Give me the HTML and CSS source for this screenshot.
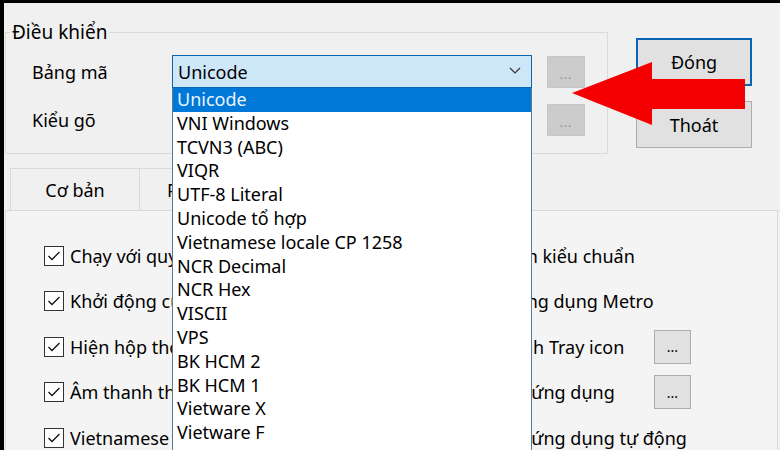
FILE: index.html
```html
<!DOCTYPE html>
<html lang="vi">
<head>
<meta charset="utf-8">
<title>Bảng điều khiển</title>
<link rel="stylesheet" href="styles.css">
</head>
<body>
<div class="window">
  <div class="top">
    <fieldset class="group">
      <legend class="group-title">Điều khiển</legend>
      <div class="group-body">
        <div class="field-label">Bảng mã</div>
        <div class="combo-wrap">
          <div class="combo combo-active">
            <span>Unicode</span>
            <svg class="chev" width="12" height="7" viewBox="0 0 12 7"><polyline points="1,1 6,6 11,1" fill="none" stroke="#333" stroke-width="1.2"/></svg>
          </div>
          <ul class="droplist">
            <li class="sel">Unicode</li>
            <li>VNI Windows</li>
            <li>TCVN3 (ABC)</li>
            <li>VIQR</li>
            <li>UTF-8 Literal</li>
            <li>Unicode tổ hợp</li>
            <li>Vietnamese locale CP 1258</li>
            <li>NCR Decimal</li>
            <li>NCR Hex</li>
            <li>VISCII</li>
            <li>VPS</li>
            <li>BK HCM 2</li>
            <li>BK HCM 1</li>
            <li>Vietware X</li>
            <li>Vietware F</li>
            <li>X UTF-8</li>
          </ul>
        </div>
        <button class="mini-btn" disabled>...</button>
        <div class="field-label">Kiểu gõ</div>
        <div class="combo"><span>Telex</span></div>
        <button class="mini-btn" disabled>...</button>
      </div>
    </fieldset>
    <div class="actions">
      <button class="btn btn-default">Đóng</button>
      <button class="btn">Thoát</button>
    </div>
  </div>

  <div class="tabs">
    <div class="tab">Cơ bản</div>
    <div class="tab tab-2">Phím tắt</div>
  </div>

  <div class="panel">
    <div class="opt-row">
      <label class="opt"><span class="cb"><svg width="14" height="12" viewBox="0 0 14 12"><polyline points="1.5,6 5,9.5 12.5,2" fill="none" stroke="#111" stroke-width="1.3"/></svg></span>Chạy với quyền Administrator</label>
      <span class="opt-right">in kiểu chuẩn</span>
      <span></span>
    </div>
    <div class="opt-row">
      <label class="opt"><span class="cb"><svg width="14" height="12" viewBox="0 0 14 12"><polyline points="1.5,6 5,9.5 12.5,2" fill="none" stroke="#111" stroke-width="1.3"/></svg></span>Khởi động cùng Windows</label>
      <span class="opt-right">ìng dụng Metro</span>
      <span></span>
    </div>
    <div class="opt-row">
      <label class="opt"><span class="cb"><svg width="14" height="12" viewBox="0 0 14 12"><polyline points="1.5,6 5,9.5 12.5,2" fill="none" stroke="#111" stroke-width="1.3"/></svg></span>Hiện hộp thoại khi khởi động</label>
      <span class="opt-right">nh Tray icon</span>
      <button class="dots-btn">...</button>
    </div>
    <div class="opt-row">
      <label class="opt"><span class="cb"><svg width="14" height="12" viewBox="0 0 14 12"><polyline points="1.5,6 5,9.5 12.5,2" fill="none" stroke="#111" stroke-width="1.3"/></svg></span>Âm thanh thông báo</label>
      <span class="opt-right">i ứng dụng</span>
      <button class="dots-btn">...</button>
    </div>
    <div class="opt-row">
      <label class="opt"><span class="cb"><svg width="14" height="12" viewBox="0 0 14 12"><polyline points="1.5,6 5,9.5 12.5,2" fill="none" stroke="#111" stroke-width="1.3"/></svg></span>Vietnamese interface</label>
      <span class="opt-right">i ứng dụng tự động</span>
      <span></span>
    </div>
  </div>

  <svg class="arrow" width="180" height="70" viewBox="0 0 180 70">
    <polygon points="4,34 84,3 84,20 177,20 177,50 84,50 84,66" fill="#f40000"/>
  </svg>
</div>
</body>
</html>
```

FILE: styles.css
```css
* { box-sizing: border-box; }

html, body {
  margin: 0;
  padding: 0;
  width: 780px;
  height: 450px;
  overflow: hidden;
}

body {
  font-family: "Noto Sans", "Open Sans", sans-serif;
  font-size: 18px;
  color: #000;
  background: #000;
}

.window {
  position: relative;
  width: 780px;
  height: 450px;
  border-top: 3px solid #000;
  border-left: 4px solid #000;
  background: #f0f0f0;
  overflow: hidden;
}

.top {
  display: flex;
  align-items: flex-start;
  padding-top: 19px;
  padding-left: 1px;
}

.group {
  margin: 0;
  padding: 0;
  width: 603px;
  border: 1px solid #dadada;
  min-width: 0;
}

.group-title {
  font-size: 19px;
  line-height: 20px;
  padding: 0 2px;
  margin-left: 4px;
}

.group-body {
  display: grid;
  grid-template-columns: 140px 360px 53px;
  grid-auto-rows: 33px;
  row-gap: 15px;
  padding: 13px 21px 17px 26px;
  align-items: center;
}

.field-label {
  font-size: 18px;
}

.combo-wrap {
  position: relative;
  height: 33px;
}

.combo {
  height: 33px;
  display: flex;
  align-items: center;
  justify-content: space-between;
  padding: 0 10px 0 5px;
  border: 1px solid #7a7a7a;
  background: #fff;
}

.combo-active {
  border-color: #0a64b4;
  background: #cde6f8;
}

.chev { margin-top: -2px; }

.droplist {
  position: absolute;
  top: 33px;
  left: 0;
  width: 360px;
  height: 400px;
  margin: 0;
  padding: 0;
  list-style: none;
  background: #fff;
  border: 1px solid #5f7b94;
  border-top: none;
  z-index: 5;
}

.droplist li {
  height: 23.8px;
  line-height: 23.8px;
  padding-left: 4px;
  white-space: nowrap;
}

.droplist li.sel {
  background: #0078d7;
  color: #e8f4ff;
}

.mini-btn {
  justify-self: end;
  width: 38px;
  height: 32px;
  border: 1px solid #c6c6c6;
  background: #cccccc;
  color: #8a8a8a;
  font-family: inherit;
  font-size: 12px;
  padding: 6px 0 0 0;
  letter-spacing: 1px;
}

.actions {
  display: flex;
  flex-direction: column;
  gap: 15px;
  margin-left: 28px;
  margin-top: 16px;
}

.btn {
  width: 116px;
  height: 47px;
  border: 1px solid #adadad;
  background: #e1e1e1;
  font-family: inherit;
  font-size: 18px;
  color: #000;
  padding: 0;
}

.btn-default {
  height: 48px;
  border: 2px solid #0a64b4;
}

.tabs {
  display: flex;
  margin-top: 14px;
  padding-left: 6px;
}

.tab {
  width: 130px;
  height: 42px;
  display: flex;
  align-items: center;
  justify-content: center;
  border: 1px solid #d9d9d9;
  border-bottom: none;
  background: #f0f0f0;
  font-size: 18px;
}

.tab-2 {
  border-left: none;
  justify-content: flex-start;
  padding-left: 27px;
}

.panel {
  margin-left: 1px;
  width: 773px;
  height: 260px;
  border: 1px solid #d9d9d9;
  background: #f4f4f4;
  padding: 22px 0 0 38px;
}

.opt-row {
  display: grid;
  grid-template-columns: 478px 132px 37px;
  height: 45.5px;
  align-items: center;
}

.opt {
  display: flex;
  align-items: center;
  gap: 6px;
  white-space: nowrap;
  overflow: hidden;
}

.cb {
  width: 20px;
  height: 20px;
  flex: none;
  border: 1px solid #333;
  background: #fff;
  display: flex;
  align-items: center;
  justify-content: center;
}

.opt-right {
  white-space: nowrap;
}

.dots-btn {
  width: 37px;
  height: 34px;
  border: 1px solid #adadad;
  background: #e1e1e1;
  font-family: inherit;
  font-size: 14px;
  padding: 0;
  color: #000;
}

.arrow {
  position: absolute;
  left: 564px;
  top: 56px;
  z-index: 10;
}
```
